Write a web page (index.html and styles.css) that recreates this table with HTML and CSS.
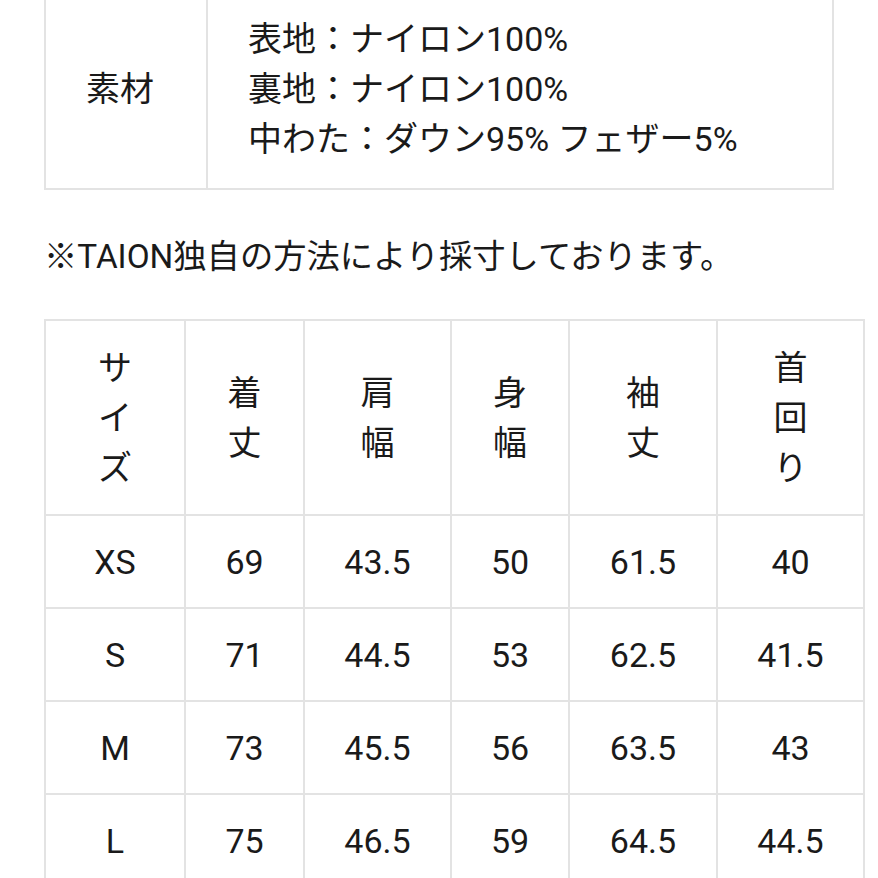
FILE: index.html
```html
<!DOCTYPE html>
<html lang="ja">
<head>
<meta charset="utf-8">
<link rel="stylesheet" href="styles.css">
</head>
<body>
<table class="material">
  <tr>
    <td class="mat-label">素材</td>
    <td class="mat-body">表地：ナイロン100%<br>裏地：ナイロン100%<br>中わた：ダウン95% フェザー5%</td>
  </tr>
</table>
<p class="note">※TAION独自の方法により採寸しております。</p>
<table class="sizes">
  <colgroup>
    <col class="c1"><col class="c2"><col class="c3"><col class="c4"><col class="c5"><col class="c6">
  </colgroup>
  <tr class="head">
    <td>サ<br>イ<br>ズ</td>
    <td>着<br>丈</td>
    <td>肩<br>幅</td>
    <td>身<br>幅</td>
    <td>袖<br>丈</td>
    <td>首<br>回<br>り</td>
  </tr>
  <tr><td>XS</td><td>69</td><td>43.5</td><td>50</td><td>61.5</td><td>40</td></tr>
  <tr><td>S</td><td>71</td><td>44.5</td><td>53</td><td>62.5</td><td>41.5</td></tr>
  <tr><td>M</td><td>73</td><td>45.5</td><td>56</td><td>63.5</td><td>43</td></tr>
  <tr><td>L</td><td>75</td><td>46.5</td><td>59</td><td>64.5</td><td>44.5</td></tr>
</table>
</body>
</html>
```
FILE: styles.css
```css
html, body {
  margin: 0;
  padding: 0;
  background: #fff;
  overflow: hidden;
}
body {
  font-family: Roboto, "Noto Sans CJK JP", sans-serif;
  font-size: 34px;
  color: #1a1a1a;
  height: 878px;
}
table {
  border-collapse: collapse;
  margin-left: 44px;
}
td {
  border: 2px solid #e3e3e3;
}
.material {
  width: 790px;
  margin-top: -12px;
}
.material td {
  line-height: 50px;
  padding: 24px 40px 24px;
  vertical-align: middle;
}
.mat-label {
  width: 80px;
  padding-left: 42px;
}
.note {
  margin: 42px 0 0 44px;
  line-height: 50px;
  font-size: 33.3px;
}
.sizes {
  width: 821px;
  margin-top: 37px;
  table-layout: fixed;
}
.c1 { width: 140px; }
.c2 { width: 119px; }
.c3 { width: 147px; }
.c4 { width: 118px; }
.c5 { width: 148px; }
.c6 { width: 147px; }
.sizes td {
  text-align: center;
  vertical-align: middle;
  padding: 0;
  height: 91px;
  line-height: 50px;
}
.sizes .head td {
  height: 193px;
}
```
